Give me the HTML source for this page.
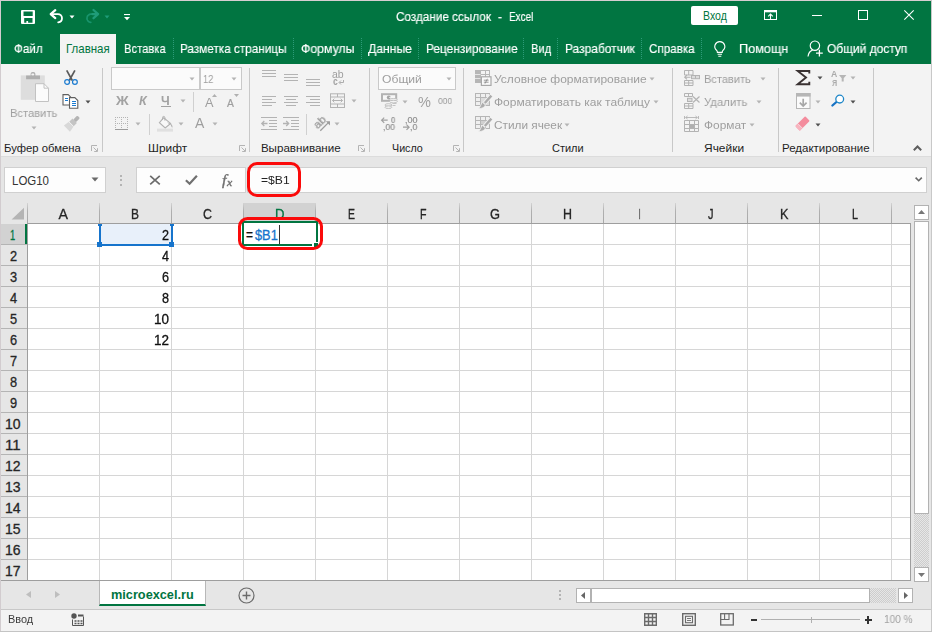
<!DOCTYPE html>
<html lang="ru"><head><meta charset="utf-8"><title>Создание ссылок - Excel</title>
<style>
html,body{margin:0;padding:0}
body{width:932px;height:632px;position:relative;overflow:hidden;background:#e6e6e6;font-family:"Liberation Sans",sans-serif;}
.t{position:absolute;white-space:nowrap;line-height:20px;transform-origin:0 0;}
svg{overflow:visible}
</style></head><body>
<section aria-label="Title bar and ribbon tabs">
<div style="position:absolute;left:0px;top:0px;width:932px;height:64px;background:#017541;"></div>
<div style="position:absolute;left:60px;top:34px;width:56px;height:31px;background:#f3f3f3;"></div>
<svg style="position:absolute;left:21px;top:10px;" width="14" height="14" viewBox="0 0 14 14"><path fill-rule="evenodd" fill="#fff" d="M1 0h12a1 1 0 0 1 1 1v12a1 1 0 0 1-1 1h-12a1 1 0 0 1-1-1v-12a1 1 0 0 1 1-1zM2.500 1.500v4.600h9.200v-4.600zM3.200 8.100v4.600h2.200v-1.700h1.700v1.700h4.400v-4.600z"/></svg>
<svg style="position:absolute;left:49px;top:9px;" width="16" height="15" viewBox="0 0 16 15"><path d="M6.300 1.100L1.700 5.100l4.600 4" fill="none" stroke="#fff" stroke-width="2.200" stroke-linecap="round" stroke-linejoin="round"/><path d="M2 5.100h6.600a4.100 4.100 0 0 1 4.400 4.200c0 2.200-1.500 3.800-3.800 4.100" fill="none" stroke="#fff" stroke-width="1.800" stroke-linecap="round" stroke-linejoin="round"/></svg>
<svg style="position:absolute;left:68.5px;top:14.5px;" width="6" height="4" viewBox="0 0 6 4"><path d="M.5 .5h5l-2.5 3z" fill="#fff"/></svg>
<svg style="position:absolute;left:84px;top:9px;" width="16" height="15" viewBox="0 0 16 15"><path d="M9.500 1l4.600 4.100-4.600 4.100M14 5.100h-5.500" fill="none" stroke="#1f9c78" stroke-width="2.300" stroke-linecap="round" stroke-linejoin="round"/><path d="M9 5.100h-1.600a4.100 4.100 0 0 0-4.400 4.200c0 2.200 1.500 3.800 3.800 4.100" fill="none" stroke="#1f9c78" stroke-width="1.700" stroke-linecap="round" stroke-dasharray="1.600 1" opacity=".8"/></svg>
<svg style="position:absolute;left:103.5px;top:14.5px;" width="6" height="4" viewBox="0 0 6 4"><path d="M.5 .5h5l-2.5 3z" fill="#1f9c78"/></svg>
<svg style="position:absolute;left:123.5px;top:14px;" width="6" height="7" viewBox="0 0 6 7"><rect x="0" y="0" width="6" height="1.100" fill="#fff"/><path d="M0 3h6l-3 3.300z" fill="#fff"/></svg>
<span class="t" style="left:395.60px;top:7px;font-size:12.5px;color:#fff;transform:scaleX(0.9383);will-change:transform;-webkit-text-stroke:.18px #fff;">Создание ссылок</span>
<span class="t" style="left:497.50px;top:7px;font-size:12.5px;color:#fff;transform:scaleX(0.9383);will-change:transform;-webkit-text-stroke:.18px #fff;">-</span>
<span class="t" style="left:508.80px;top:7px;font-size:12.5px;color:#fff;transform:scaleX(0.7984);will-change:transform;-webkit-text-stroke:.18px #fff;">Excel</span>
<div style="position:absolute;left:691px;top:6px;width:47px;height:19px;background:#fff;border-radius:2px;"></div>
<span class="t" style="left:702.70px;top:6px;font-size:12.4px;color:#017541;transform:scaleX(0.8483);">Вход</span>
<svg style="position:absolute;left:764px;top:10px;" width="13" height="10" viewBox="0 0 13 10"><rect x=".5" y=".5" width="12" height="9" fill="none" stroke="#fff"/><rect x=".5" y=".5" width="12" height="1.800" fill="#fff"/><path d="M6.500 9.500v-5.500M4.200 6.300l2.300-2.300 2.300 2.300" fill="none" stroke="#fff" stroke-width="1.100"/></svg>
<div style="position:absolute;left:812px;top:15px;width:10px;height:1px;background:#fff;"></div>
<svg style="position:absolute;left:858px;top:10px;" width="10" height="10" viewBox="0 0 10 10"><rect x=".5" y=".5" width="9" height="9" fill="none" stroke="#fff"/></svg>
<svg style="position:absolute;left:904px;top:10px;" width="10" height="10" viewBox="0 0 10 10"><path d="M.3 .3l9.400 9.400M9.700 .3l-9.400 9.400" stroke="#fff" stroke-width="1.100"/></svg>
<span class="t" style="left:13.70px;top:39px;font-size:12.8px;color:#fff;transform:scaleX(0.9124);will-change:transform;-webkit-text-stroke:.18px #fff;">Файл</span>
<span class="t" style="left:65.70px;top:39px;font-size:12.8px;color:#017541;transform:scaleX(0.8967);">Главная</span>
<span class="t" style="left:123.70px;top:39px;font-size:12.8px;color:#fff;transform:scaleX(0.8763);will-change:transform;-webkit-text-stroke:.18px #fff;">Вставка</span>
<span class="t" style="left:179.70px;top:39px;font-size:12.8px;color:#fff;transform:scaleX(0.9171);will-change:transform;-webkit-text-stroke:.18px #fff;">Разметка страницы</span>
<span class="t" style="left:300.90px;top:39px;font-size:12.8px;color:#fff;transform:scaleX(0.9603);will-change:transform;-webkit-text-stroke:.18px #fff;">Формулы</span>
<span class="t" style="left:367.90px;top:39px;font-size:12.8px;color:#fff;transform:scaleX(0.9516);will-change:transform;-webkit-text-stroke:.18px #fff;">Данные</span>
<span class="t" style="left:425.50px;top:39px;font-size:12.8px;color:#fff;transform:scaleX(0.9277);will-change:transform;-webkit-text-stroke:.18px #fff;">Рецензирование</span>
<span class="t" style="left:530.70px;top:39px;font-size:12.8px;color:#fff;transform:scaleX(0.8719);will-change:transform;-webkit-text-stroke:.18px #fff;">Вид</span>
<span class="t" style="left:564.70px;top:39px;font-size:12.8px;color:#fff;transform:scaleX(0.9355);will-change:transform;-webkit-text-stroke:.18px #fff;">Разработчик</span>
<span class="t" style="left:648.90px;top:39px;font-size:12.8px;color:#fff;transform:scaleX(0.9096);will-change:transform;-webkit-text-stroke:.18px #fff;">Справка</span>
<span class="t" style="left:738.90px;top:39px;font-size:12.8px;color:#fff;transform:scaleX(0.9895);will-change:transform;-webkit-text-stroke:.18px #fff;">Помощн</span>
<span class="t" style="left:826.90px;top:39px;font-size:12.8px;color:#fff;transform:scaleX(0.9335);will-change:transform;-webkit-text-stroke:.18px #fff;">Общий доступ</span>
<div style="position:absolute;left:172.5px;top:38px;width:0px;height:21px;border-left:1px dotted #2e9b78;"></div>
<div style="position:absolute;left:293.0px;top:38px;width:0px;height:21px;border-left:1px dotted #2e9b78;"></div>
<div style="position:absolute;left:361.0px;top:38px;width:0px;height:21px;border-left:1px dotted #2e9b78;"></div>
<div style="position:absolute;left:418.0px;top:38px;width:0px;height:21px;border-left:1px dotted #2e9b78;"></div>
<div style="position:absolute;left:523.0px;top:38px;width:0px;height:21px;border-left:1px dotted #2e9b78;"></div>
<div style="position:absolute;left:557.0px;top:38px;width:0px;height:21px;border-left:1px dotted #2e9b78;"></div>
<div style="position:absolute;left:641.0px;top:38px;width:0px;height:21px;border-left:1px dotted #2e9b78;"></div>
<div style="position:absolute;left:701.0px;top:38px;width:0px;height:21px;border-left:1px dotted #2e9b78;"></div>
<svg style="position:absolute;left:713.5px;top:41px;" width="12" height="16" viewBox="0 0 12 16"><path d="M5.800 .6a4.900 4.900 0 0 0-3.300 8.600c.6.600.9 1.300.9 2.200h4.800c0-.9.300-1.600.9-2.200a4.900 4.900 0 0 0-3.300-8.600z" fill="none" stroke="#fff" stroke-width="1.150"/><path d="M3.600 13.200h4.400M4.300 15.200h3" stroke="#fff" stroke-width="1.100"/></svg>
<svg style="position:absolute;left:807px;top:40px;" width="18" height="18" viewBox="0 0 18 18"><circle cx="7.900" cy="5.700" r="4.700" fill="none" stroke="#fff" stroke-width="1.150"/><path d="M1 16.500c.5-3.500 2.300-5.700 4.600-6.400" fill="none" stroke="#fff" stroke-width="1.150"/><path d="M12.400 9.800v6.800M9 13.200h6.800" stroke="#fff" stroke-width="1.300"/></svg>
</section>
<section aria-label="Ribbon: Home">
<div style="position:absolute;left:0px;top:64px;width:932px;height:92px;background:#f3f3f3;"></div>
<div style="position:absolute;left:0px;top:156px;width:932px;height:1px;background:#dcdcdc;"></div>
<div style="position:absolute;left:102px;top:68px;width:1px;height:84px;background:#c8c8c8;"></div>
<div style="position:absolute;left:249px;top:68px;width:1px;height:84px;background:#c8c8c8;"></div>
<div style="position:absolute;left:369px;top:68px;width:1px;height:84px;background:#c8c8c8;"></div>
<div style="position:absolute;left:463px;top:68px;width:1px;height:84px;background:#c8c8c8;"></div>
<div style="position:absolute;left:672px;top:68px;width:1px;height:84px;background:#c8c8c8;"></div>
<div style="position:absolute;left:778px;top:68px;width:1px;height:84px;background:#c8c8c8;"></div>
<div style="position:absolute;left:873px;top:68px;width:1px;height:84px;background:#c8c8c8;"></div>
<span class="t" style="left:3.70px;top:138px;font-size:11.6px;color:#1e1e1e;transform:scaleX(0.9740);">Буфер обмена</span>
<span class="t" style="left:147.90px;top:138px;font-size:11.6px;color:#1e1e1e;transform:scaleX(1.0245);">Шрифт</span>
<span class="t" style="left:260.90px;top:138px;font-size:11.6px;color:#1e1e1e;">Выравнивание</span>
<span class="t" style="left:392.20px;top:138px;font-size:11.6px;color:#1e1e1e;transform:scaleX(0.9235);">Число</span>
<span class="t" style="left:551.90px;top:138px;font-size:11.6px;color:#1e1e1e;transform:scaleX(0.9459);">Стили</span>
<span class="t" style="left:704.40px;top:138px;font-size:11.6px;color:#1e1e1e;transform:scaleX(1.0304);">Ячейки</span>
<span class="t" style="left:781.90px;top:138px;font-size:11.6px;color:#1e1e1e;transform:scaleX(0.9914);">Редактирование</span>
<svg style="position:absolute;left:91px;top:145px;" width="7" height="7" viewBox="0 0 7 7"><path d="M.5 6v-5.500h5.500" fill="none" stroke="#b4b4b4"/><path d="M2.500 2.500l3.500 3.500M6.500 3.200v3.300h-3.300" fill="none" stroke="#b4b4b4"/></svg>
<svg style="position:absolute;left:239px;top:145px;" width="7" height="7" viewBox="0 0 7 7"><path d="M.5 6v-5.500h5.500" fill="none" stroke="#b4b4b4"/><path d="M2.500 2.500l3.500 3.500M6.500 3.200v3.300h-3.300" fill="none" stroke="#b4b4b4"/></svg>
<svg style="position:absolute;left:358px;top:145px;" width="7" height="7" viewBox="0 0 7 7"><path d="M.5 6v-5.500h5.500" fill="none" stroke="#b4b4b4"/><path d="M2.500 2.500l3.500 3.500M6.500 3.200v3.300h-3.300" fill="none" stroke="#b4b4b4"/></svg>
<svg style="position:absolute;left:452.5px;top:145px;" width="7" height="7" viewBox="0 0 7 7"><path d="M.5 6v-5.500h5.500" fill="none" stroke="#b4b4b4"/><path d="M2.500 2.500l3.500 3.500M6.500 3.200v3.300h-3.300" fill="none" stroke="#b4b4b4"/></svg>
<svg style="position:absolute;left:913px;top:144.5px;" width="9" height="6" viewBox="0 0 9 6"><path d="M.8 5.200l3.700-3.700 3.700 3.700" fill="none" stroke="#5e5e5e" stroke-width="2"/></svg>
<svg style="position:absolute;left:20px;top:72px;" width="30" height="31" viewBox="0 0 30 31"><rect x=".8" y="3.400" width="24" height="24.400" fill="#dddddd"/><path fill-rule="evenodd" d="M6.100 7.200v-3.600h4.500v-1.500a2 2 0 0 1 2-2h.8a2 2 0 0 1 2 2v1.500h4.600v3.600zM12.200 1.600a.9.9 0 0 0 0 1.800h1.200a.9.9 0 0 0 0-1.800z" fill="#aeaeae"/><path d="M15.500 11.700h8.500l4.500 4.500v13.300h-13z" fill="#fbfbfb" stroke="#c2c2c2"/><path d="M24 11.700v4.500h4.500" fill="none" stroke="#c2c2c2"/></svg>
<span class="t" style="left:9.50px;top:103px;font-size:11.8px;color:#9e9e9e;transform:scaleX(0.9474);will-change:transform;">Вставить</span>
<svg style="position:absolute;left:30.6px;top:126.4px;" width="6" height="4" viewBox="0 0 6 4"><path d="M.5 .5h5l-2.5 3z" fill="#b4b4b4"/></svg>
<svg style="position:absolute;left:63px;top:70px;" width="16" height="16" viewBox="0 0 16 16"><path d="M3.700 .3l5.600 10.200M11.900 .3l-5.600 10.200" stroke="#5a5a5a" stroke-width="1.700"/><circle cx="4.100" cy="12" r="2.400" fill="#f3f3f3" stroke="#1b7bd0" stroke-width="1.200"/><circle cx="11.900" cy="12" r="2.400" fill="#f3f3f3" stroke="#1b7bd0" stroke-width="1.200"/></svg>
<svg style="position:absolute;left:62px;top:94px;" width="17" height="15" viewBox="0 0 17 15"><path d="M1 .6h5.200l2.800 2.800v7.600h-8z" fill="#fff" stroke="#5f5f5f" stroke-width="1.100"/><path d="M3 4.500h3M3 6.500h3" stroke="#1b7bd0" stroke-width="1"/><path d="M7.500 3.600h5.300l3 3v7.600h-8.300z" fill="#fff" stroke="#5f5f5f" stroke-width="1.100"/><path d="M10 7.500h4M10 9.500h4M10 11.500h4" stroke="#1b7bd0" stroke-width="1"/></svg>
<svg style="position:absolute;left:84.5px;top:99.6px;" width="6" height="4" viewBox="0 0 6 4"><path d="M.5 .5h5l-2.5 3z" fill="#505050"/></svg>
<svg style="position:absolute;left:63px;top:116px;" width="17" height="15" viewBox="0 0 17 15"><g transform="rotate(-45 9 7.500)"><rect x="12.400" y="5.600" width="6" height="3.800" rx="1.200" fill="#b4b4b4"/><rect x="8.200" y="4.400" width="4.600" height="6.200" fill="#c4c4c4"/><path d="M8 4.200l-6.200 -1v8.600l6.200-1z" fill="#d8d8d8"/><path d="M8 4.200v6.600" stroke="#f3f3f3" stroke-width=".8"/></g></svg>
<div style="position:absolute;left:111px;top:67px;width:88.5px;height:22.5px;background:#fbfbfb;border:1px solid #c9c9c9;box-sizing:border-box;"></div>
<div style="position:absolute;left:199.5px;top:67px;width:42.5px;height:22.5px;background:#fbfbfb;border:1px solid #c9c9c9;box-sizing:border-box;"></div>
<svg style="position:absolute;left:188.7px;top:76.5px;" width="6" height="4" viewBox="0 0 6 4"><path d="M.5 .5h5l-2.5 3z" fill="#b4b4b4"/></svg>
<svg style="position:absolute;left:231.4px;top:76.5px;" width="6" height="4" viewBox="0 0 6 4"><path d="M.5 .5h5l-2.5 3z" fill="#b4b4b4"/></svg>
<span class="t" style="left:203.00px;top:69px;font-size:11.8px;color:#9e9e9e;transform:scaleX(0.7922);will-change:transform;">12</span>
<span class="t" style="left:115.67px;top:91px;font-size:12.4px;color:#a2a2a2;transform:scaleX(1.1282);font-weight:bold;will-change:transform;">Ж</span>
<span class="t" style="left:139.20px;top:91px;font-size:12.4px;color:#a2a2a2;transform:scaleX(1.0193);font-weight:bold;font-style:italic;will-change:transform;">К</span>
<span class="t" style="left:161.30px;top:91px;font-size:12.4px;color:#a2a2a2;transform:scaleX(0.9643);font-weight:bold;will-change:transform;">Ч</span>
<div style="position:absolute;left:161px;top:105.6px;width:10px;height:1px;background:#a2a2a2;"></div>
<svg style="position:absolute;left:179.5px;top:99.2px;" width="6" height="4" viewBox="0 0 6 4"><path d="M.5 .5h5l-2.5 3z" fill="#b4b4b4"/></svg>
<div style="position:absolute;left:193px;top:91.5px;width:1px;height:20px;background:#d0d0d0;"></div>
<span class="t" style="left:204.90px;top:93px;font-size:12px;color:#9e9e9e;transform:scaleX(1.0612);will-change:transform;">A</span>
<svg style="position:absolute;left:212px;top:94px;" width="5" height="3" viewBox="0 0 5 3"><path d="M0 3h5l-2.500-3z" fill="#b0b0b0"/></svg>
<span class="t" style="left:227.30px;top:94px;font-size:10.2px;color:#9e9e9e;transform:scaleX(1.0134);will-change:transform;-webkit-text-stroke:.2px #9e9e9e;">A</span>
<svg style="position:absolute;left:234px;top:94px;" width="5" height="3" viewBox="0 0 5 3"><path d="M0 0h5l-2.500 3z" fill="#b0b0b0"/></svg>
<svg style="position:absolute;left:115px;top:117px;" width="13" height="13" viewBox="0 0 13 13"><path d="M0 .5h13M0 6.500h13M.5 0v13M6.500 0v13M12.500 0v13" fill="none" stroke="#b4b4b4" stroke-dasharray="1 1"/><path d="M0 12.500h13" stroke="#9c9c9c"/></svg>
<svg style="position:absolute;left:135.4px;top:122.3px;" width="6" height="4" viewBox="0 0 6 4"><path d="M.5 .5h5l-2.5 3z" fill="#b4b4b4"/></svg>
<div style="position:absolute;left:149px;top:114px;width:1px;height:21px;background:#d0d0d0;"></div>
<svg style="position:absolute;left:157px;top:116px;" width="17" height="16" viewBox="0 0 17 16"><path d="M6.600 1.800l7 5.600-5.400 4.600-5.800-5.400z" fill="#f8f8f8" stroke="#b2b2b2" stroke-width="1.100"/><path d="M5.500 4v-2.400a1.200 1.200 0 0 1 2.400 0v3" fill="none" stroke="#b2b2b2"/><path d="M13.600 7.400c1.600 1.400 2.400 3 1.600 4.400-.8-1.200-1.600-2.600-1.600-4.400z" fill="#b2b2b2"/><path d="M10 6l4 2-1 1z" fill="#b2b2b2"/><rect x="0" y="12.600" width="16" height="3" fill="#e0e0e0"/></svg>
<svg style="position:absolute;left:178.4px;top:122.3px;" width="6" height="4" viewBox="0 0 6 4"><path d="M.5 .5h5l-2.5 3z" fill="#b4b4b4"/></svg>
<span class="t" style="left:194.80px;top:113px;font-size:14px;color:#9e9e9e;transform:scaleX(0.9952);will-change:transform;">A</span>
<svg style="position:absolute;left:212.4px;top:122.3px;" width="6" height="4" viewBox="0 0 6 4"><path d="M.5 .5h5l-2.5 3z" fill="#b4b4b4"/></svg>
<svg style="position:absolute;left:262px;top:70px;" width="14" height="7" viewBox="0 0 14 7"><rect x="0" y="0" width="14" height="1" fill="#b3b3b3"/><rect x="0" y="3" width="14" height="1" fill="#b3b3b3"/><rect x="0" y="6" width="14" height="1" fill="#b3b3b3"/></svg>
<svg style="position:absolute;left:284px;top:74px;" width="14" height="7" viewBox="0 0 14 7"><rect x="0" y="0" width="14" height="1" fill="#b3b3b3"/><rect x="0" y="3" width="14" height="1" fill="#b3b3b3"/><rect x="0" y="6" width="14" height="1" fill="#b3b3b3"/></svg>
<svg style="position:absolute;left:306px;top:79px;" width="14" height="7" viewBox="0 0 14 7"><rect x="0" y="0" width="14" height="1" fill="#b3b3b3"/><rect x="0" y="3" width="14" height="1" fill="#b3b3b3"/><rect x="0" y="6" width="14" height="1" fill="#b3b3b3"/></svg>
<svg style="position:absolute;left:262px;top:96px;" width="14" height="10" viewBox="0 0 14 10"><rect x="0" y="0" width="14" height="1" fill="#b3b3b3"/><rect x="0" y="3" width="10" height="1" fill="#b3b3b3"/><rect x="0" y="6" width="14" height="1" fill="#b3b3b3"/><rect x="0" y="9" width="10" height="1" fill="#b3b3b3"/></svg>
<svg style="position:absolute;left:284px;top:96px;" width="14" height="10" viewBox="0 0 14 10"><rect x="0.0" y="0" width="14" height="1" fill="#b3b3b3"/><rect x="2.0" y="3" width="10" height="1" fill="#b3b3b3"/><rect x="0.0" y="6" width="14" height="1" fill="#b3b3b3"/><rect x="2.0" y="9" width="10" height="1" fill="#b3b3b3"/></svg>
<svg style="position:absolute;left:306px;top:96px;" width="14" height="10" viewBox="0 0 14 10"><rect x="0" y="0" width="14" height="1" fill="#b3b3b3"/><rect x="4" y="3" width="10" height="1" fill="#b3b3b3"/><rect x="0" y="6" width="14" height="1" fill="#b3b3b3"/><rect x="4" y="9" width="10" height="1" fill="#b3b3b3"/></svg>
<span class="t" style="left:332.10px;top:64px;font-size:10.5px;color:#9e9e9e;transform:scaleX(0.9674);will-change:transform;">ab</span>
<span class="t" style="left:332.50px;top:71px;font-size:10.5px;color:#9e9e9e;transform:scaleX(0.8065);font-weight:bold;will-change:transform;">c</span>
<svg style="position:absolute;left:339px;top:80px;" width="5" height="5" viewBox="0 0 5 5"><path d="M4.500 0v2.500h-4M2 .5l-2 2 2 2" fill="none" stroke="#adadad"/></svg>
<svg style="position:absolute;left:330px;top:93px;" width="15" height="15" viewBox="0 0 15 15"><rect x=".5" y=".8" width="14" height="13.700" fill="none" stroke="#b3b3b3"/><path d="M.5 4h14M.5 11h14M7.500 .8v3.200M7.500 11v3.500" stroke="#b3b3b3"/><path d="M2.500 7.500h10M4.300 5.700l-1.800 1.800 1.800 1.800M10.700 5.700l1.800 1.800-1.800 1.800" fill="none" stroke="#b3b3b3"/></svg>
<svg style="position:absolute;left:351.4px;top:99.3px;" width="6" height="4" viewBox="0 0 6 4"><path d="M.5 .5h5l-2.5 3z" fill="#b4b4b4"/></svg>
<svg style="position:absolute;left:261px;top:117px;" width="16" height="13" viewBox="0 0 16 13"><path d="M0 .5h16M8 3.500h8M8 6.500h8M8 9.500h8M0 12.500h16" stroke="#b3b3b3"/><path d="M6.500 6.500h-5.500M3.300 4l-2.500 2.500 2.500 2.500" fill="none" stroke="#b3b3b3" stroke-width="1.300"/></svg>
<svg style="position:absolute;left:283px;top:117px;" width="16" height="13" viewBox="0 0 16 13"><path d="M0 .5h16M8 3.500h8M8 6.500h8M8 9.500h8M0 12.500h16" stroke="#b3b3b3"/><path d="M0 6.500h5.500M3.200 4l2.500 2.500-2.500 2.500" fill="none" stroke="#b3b3b3" stroke-width="1.300"/></svg>
<div style="position:absolute;left:306px;top:114px;width:1px;height:21px;background:#d0d0d0;"></div>
<span class="t" style="left:313.300px;top:111.700px;font-size:11.500px;color:#909090;-webkit-text-stroke:.25px #909090;will-change:transform;transform:rotate(-45deg);transform-origin:50% 50%;">ab</span>
<svg style="position:absolute;left:319px;top:120px;" width="12" height="12" viewBox="0 0 12 12"><path d="M1.300 10.700l8.600-8.600" fill="none" stroke="#9c9c9c" stroke-width="1.300"/><path d="M6.800 1.200h4.200v4.200z" fill="#9c9c9c"/></svg>
<svg style="position:absolute;left:333.5px;top:122.3px;" width="6" height="4" viewBox="0 0 6 4"><path d="M.5 .5h5l-2.5 3z" fill="#b4b4b4"/></svg>
<div style="position:absolute;left:378px;top:67px;width:78px;height:22.5px;background:#fbfbfb;border:1px solid #c9c9c9;box-sizing:border-box;"></div>
<span class="t" style="left:381.60px;top:69px;font-size:11.8px;color:#9e9e9e;transform:scaleX(1.0278);will-change:transform;">Общий</span>
<svg style="position:absolute;left:445.5px;top:76.5px;" width="6" height="4" viewBox="0 0 6 4"><path d="M.5 .5h5l-2.5 3z" fill="#b4b4b4"/></svg>
<svg style="position:absolute;left:380px;top:92px;" width="18" height="18" viewBox="0 0 18 18"><rect x="2" y="2.200" width="14.200" height="6.600" fill="#f6f6f6" stroke="#b2b2b2" stroke-width="2"/><circle cx="8.800" cy="5.500" r="2" fill="#a6a6a6"/><path d="M8.800 5.500l2-1v2z" fill="#f6f6f6"/><g fill="#f3f3f3" stroke="#bcbcbc" stroke-width=".9"><ellipse cx="13.400" cy="7.800" rx="3.800" ry="1.300"/><ellipse cx="13.400" cy="9.600" rx="3.800" ry="1.300"/><ellipse cx="8.400" cy="13" rx="3.500" ry="1.300"/><ellipse cx="8.400" cy="15.200" rx="3.500" ry="1.300"/></g><path d="M12.500 11.500h4M12.500 13.500h3" stroke="#c4c4c4"/></svg>
<svg style="position:absolute;left:402.4px;top:99.5px;" width="6" height="4" viewBox="0 0 6 4"><path d="M.5 .5h5l-2.5 3z" fill="#b4b4b4"/></svg>
<span class="t" style="left:417.50px;top:92px;font-size:14.5px;color:#a0a0a0;transform:scaleX(0.9764);will-change:transform;">%</span>
<span class="t" style="left:438.00px;top:91px;font-size:9.5px;color:#9a9a9a;transform:scaleX(0.8964);will-change:transform;">000</span>
<span class="t" style="left:390.90px;top:110px;font-size:9px;color:#8f8f8f;transform:scaleX(0.8408);will-change:transform;-webkit-text-stroke:.2px #8f8f8f;">0</span>
<span class="t" style="left:383.20px;top:117px;font-size:9px;color:#8f8f8f;transform:scaleX(0.9512);will-change:transform;-webkit-text-stroke:.2px #8f8f8f;">,00</span>
<svg style="position:absolute;left:381px;top:117px;" width="7" height="6" viewBox="0 0 7 6"><path d="M6.700 3.200h-5.700M3.200 .6l-2.600 2.600 2.600 2.600" fill="none" stroke="#a0a0a0" stroke-width="1.200"/></svg>
<span class="t" style="left:404.80px;top:110px;font-size:9px;color:#8f8f8f;will-change:transform;-webkit-text-stroke:.2px #8f8f8f;">,00</span>
<span class="t" style="left:410.00px;top:117px;font-size:9px;color:#8f8f8f;transform:scaleX(0.9714);will-change:transform;-webkit-text-stroke:.2px #8f8f8f;">,0</span>
<svg style="position:absolute;left:403px;top:124px;" width="7" height="6" viewBox="0 0 7 6"><path d="M0 3.200h5.700M3.500 .6l2.600 2.600-2.600 2.600" fill="none" stroke="#a0a0a0" stroke-width="1.200"/></svg>
<svg style="position:absolute;left:475px;top:70px;" width="17" height="16" viewBox="0 0 17 16"><rect x=".5" y=".5" width="14" height="12" fill="#f3f3f3" stroke="#b6b6b6"/><path d="M.5 4.500h14M.5 8.500h14M5.500 .5v12M10.500 .5v12" stroke="#b6b6b6"/><rect x="0" y="0" width="5.500" height="13" fill="#b6b6b6"/><path d="M0 4.500h5.500M0 8.500h5.500" stroke="#e4e4e4"/><rect x="6.400" y="6.800" width="9.600" height="8.600" fill="#fafafa" stroke="#a8a8a8" stroke-width="1.200"/><path d="M8.800 10.200h4.800M8.800 12.200h4.800M12.400 8.800l-2.400 4.800" stroke="#8f8f8f" stroke-width=".9"/></svg>
<svg style="position:absolute;left:475px;top:93px;" width="17" height="16" viewBox="0 0 17 16"><rect x=".5" y=".5" width="14" height="12" fill="#efefef" stroke="#b6b6b6"/><path d="M.5 4.500h14M.5 8.500h14M5.500 .5v12M10.500 .5v12" stroke="#b6b6b6"/><rect x="6" y="5" width="8" height="7" fill="#dcdcdc"/><path d="M16.400 2.600l-6.800 7.600" stroke="#f3f3f3" stroke-width="4.200"/><path d="M16.400 2.600l-6.600 7.400" stroke="#acacac" stroke-width="2.400"/><path d="M7.400 9.200l3 2.800c-.6 2.400-3.600 3.800-7 3.400 2-1 2.200-3.800 4-6.200z" fill="#acacac" stroke="#f3f3f3" stroke-width=".8"/></svg>
<svg style="position:absolute;left:475px;top:116px;" width="17" height="16" viewBox="0 0 17 16"><rect x=".5" y=".5" width="14" height="12" fill="#efefef" stroke="#b6b6b6"/><path d="M.5 4.500h14M.5 8.500h14M5.500 .5v12M10.500 .5v12" stroke="#b6b6b6"/><rect x="6" y="5" width="8" height="3" fill="#d0d0d0"/><path d="M16.400 2.600l-6.800 7.600" stroke="#f3f3f3" stroke-width="4.200"/><path d="M16.400 2.600l-6.600 7.400" stroke="#acacac" stroke-width="2.400"/><path d="M7.400 9.200l3 2.800c-.6 2.400-3.600 3.800-7 3.400 2-1 2.200-3.800 4-6.200z" fill="#acacac" stroke="#f3f3f3" stroke-width=".8"/></svg>
<span class="t" style="left:494.30px;top:69px;font-size:11.8px;color:#9e9e9e;transform:scaleX(1.0171);will-change:transform;">Условное форматирование</span>
<svg style="position:absolute;left:648.5px;top:76.5px;" width="6" height="4" viewBox="0 0 6 4"><path d="M.5 .5h5l-2.5 3z" fill="#b4b4b4"/></svg>
<span class="t" style="left:494.30px;top:92px;font-size:11.8px;color:#9e9e9e;transform:scaleX(1.0162);will-change:transform;">Форматировать как таблицу</span>
<svg style="position:absolute;left:652.5px;top:99.5px;" width="6" height="4" viewBox="0 0 6 4"><path d="M.5 .5h5l-2.5 3z" fill="#b4b4b4"/></svg>
<span class="t" style="left:494.30px;top:115px;font-size:11.8px;color:#9e9e9e;will-change:transform;">Стили ячеек</span>
<svg style="position:absolute;left:564.0px;top:122.5px;" width="6" height="4" viewBox="0 0 6 4"><path d="M.5 .5h5l-2.5 3z" fill="#b4b4b4"/></svg>
<svg style="position:absolute;left:684px;top:70px;" width="16" height="16" viewBox="0 0 16 16"><g fill="none" stroke="#b3b3b3"><path d="M.5 .5h8.500v4.500h-8.500zM4.700 .5v4.500M.5 10.500h8.500v5h-8.500zM4.700 10.500v5M.5 13h8.500"/><rect x="7.500" y="5.500" width="8" height="3.200" fill="#dcdcdc"/><path d="M11.500 5.500v3.200"/><path d="M6.500 7.200h-5.500M3 5l-2.300 2.200 2.300 2.200" stroke-width="1.100"/></g></svg>
<svg style="position:absolute;left:684px;top:93px;" width="16" height="16" viewBox="0 0 16 16"><g fill="none" stroke="#b3b3b3"><path d="M.5 .5h8v3h-8zM4.500 .5v3M.5 10.500h8.500v5h-8.500zM4.700 10.500v5M.5 13h8.500"/><rect x="3.500" y="5.300" width="4.500" height="3.200" fill="#dcdcdc"/><path d="M9 3.500l6.500 6M15.500 3.500l-6.500 6" stroke-width="1.200"/></g></svg>
<svg style="position:absolute;left:684px;top:116px;" width="16" height="16" viewBox="0 0 16 16"><g fill="none" stroke="#b3b3b3"><path d="M.5 4.500h14v11h-14zM.5 8.500h14M.5 12.500h14M5.500 4.500v11M10.500 4.500v11"/><rect x="6" y="9" width="4" height="3" fill="#b0b0b0" stroke="none"/><path d="M.5 0v3M14.500 0v3M1.500 1.500h12M3.500 0l-1.800 1.500 1.800 1.500M11.500 0l1.800 1.500-1.800 1.500" stroke-width=".9"/></g></svg>
<span class="t" style="left:703.50px;top:69px;font-size:11.8px;color:#9e9e9e;transform:scaleX(0.9374);will-change:transform;">Вставить</span>
<svg style="position:absolute;left:760.2px;top:76.6px;" width="6" height="4" viewBox="0 0 6 4"><path d="M.5 .5h5l-2.5 3z" fill="#b4b4b4"/></svg>
<span class="t" style="left:703.50px;top:92px;font-size:11.8px;color:#9e9e9e;transform:scaleX(0.9612);will-change:transform;">Удалить</span>
<svg style="position:absolute;left:756.4px;top:99.5px;" width="6" height="4" viewBox="0 0 6 4"><path d="M.5 .5h5l-2.5 3z" fill="#b4b4b4"/></svg>
<span class="t" style="left:703.50px;top:115px;font-size:11.8px;color:#9e9e9e;transform:scaleX(1.0067);will-change:transform;">Формат</span>
<svg style="position:absolute;left:748.5px;top:122.5px;" width="6" height="4" viewBox="0 0 6 4"><path d="M.5 .5h5l-2.5 3z" fill="#b4b4b4"/></svg>
<svg style="position:absolute;left:795px;top:70px;" width="16" height="15.5" viewBox="0 0 16 15.5"><path d="M14.300 3.400v-2.400h-11.600l8.300 6.600-8.300 6.600h11.600v-2.400" fill="none" stroke="#3a3232" stroke-width="1.900" stroke-linejoin="miter"/></svg>
<svg style="position:absolute;left:816.5px;top:76.4px;" width="6" height="4" viewBox="0 0 6 4"><path d="M.5 .5h5l-2.5 3z" fill="#505050"/></svg>
<span class="t" style="left:830.90px;top:64px;font-size:8.7px;color:#ababab;transform:scaleX(0.9864);font-weight:bold;will-change:transform;">А</span>
<span class="t" style="left:831.50px;top:73px;font-size:8.7px;color:#ababab;transform:scaleX(0.8142);font-weight:bold;will-change:transform;">Я</span>
<svg style="position:absolute;left:839px;top:75px;" width="8" height="7" viewBox="0 0 8 7"><path d="M0 0h7.400l-2.700 3.200v3.300h-2v-3.300z" fill="#b6b6b6"/></svg>
<svg style="position:absolute;left:849.6px;top:76.4px;" width="6" height="4" viewBox="0 0 6 4"><path d="M.5 .5h5l-2.5 3z" fill="#b4b4b4"/></svg>
<svg style="position:absolute;left:795.5px;top:93px;" width="15" height="16" viewBox="0 0 15 16"><rect x=".5" y=".5" width="13.500" height="15" fill="#fbfbfb" stroke="#b6b6b6"/><rect x="0" y="0" width="14.500" height="3.600" fill="#b6b6b6"/><path d="M7.200 5.800v7M3.800 9.600l3.400 3.400 3.400-3.400" fill="none" stroke="#a8a8a8" stroke-width="1.700"/></svg>
<svg style="position:absolute;left:814.5px;top:99.5px;" width="6" height="4" viewBox="0 0 6 4"><path d="M.5 .5h5l-2.5 3z" fill="#b4b4b4"/></svg>
<svg style="position:absolute;left:830px;top:93px;" width="16" height="15" viewBox="0 0 16 15"><path d="M7 8.500l-4.600 4" stroke="#1672c4" stroke-width="2.300" stroke-linecap="round"/><circle cx="9.700" cy="6.100" r="3.900" fill="#fff" stroke="#1d86c8" stroke-width="1.300"/></svg>
<svg style="position:absolute;left:849.6px;top:99.5px;" width="6" height="4" viewBox="0 0 6 4"><path d="M.5 .5h5l-2.5 3z" fill="#505050"/></svg>
<svg style="position:absolute;left:796px;top:116.5px;" width="13" height="13" viewBox="0 0 13 13"><g transform="rotate(-45 6.500 6.500)"><rect x="-.5" y="3.300" width="14" height="6.400" rx=".8" fill="#f48c9d"/><rect x="-.5" y="3.300" width="3.400" height="6.400" rx=".8" fill="#f8b4bf"/><path d="M3.100 3.300v6.400" stroke="#f3f3f3" stroke-width=".7"/></g></svg>
<svg style="position:absolute;left:814.5px;top:122.5px;" width="6" height="4" viewBox="0 0 6 4"><path d="M.5 .5h5l-2.5 3z" fill="#505050"/></svg>
</section>
<section aria-label="Formula bar">
<div style="position:absolute;left:4px;top:167px;width:102px;height:26px;background:#fdfdfd;border:1px solid #d0d0d0;box-sizing:border-box;"></div>
<span class="t" style="left:12.00px;top:171px;font-size:12.5px;color:#333;transform:scaleX(0.9178);">LOG10</span>
<svg style="position:absolute;left:91.3px;top:177.0px;" width="8" height="5" viewBox="0 0 8 5"><path d="M.5 .5h7l-3.5 4z" fill="#6a6a6a"/></svg>
<div style="position:absolute;left:120px;top:174.5px;width:2px;height:2px;background:#b4b4b4;"></div>
<div style="position:absolute;left:120px;top:179px;width:2px;height:2px;background:#b4b4b4;"></div>
<div style="position:absolute;left:120px;top:183.5px;width:2px;height:2px;background:#b4b4b4;"></div>
<div style="position:absolute;left:136px;top:167px;width:110px;height:26px;background:#fdfdfd;border:1px solid #d0d0d0;box-sizing:border-box;"></div>
<div style="position:absolute;left:247px;top:167px;width:680px;height:26px;background:#fdfdfd;border:1px solid #d0d0d0;box-sizing:border-box;"></div>
<svg style="position:absolute;left:149px;top:175px;" width="12" height="10" viewBox="0 0 12 10"><path d="M1.200 .8l9.600 8.600M10.800 .8l-9.600 8.600" stroke="#6c6c6c" stroke-width="1.700"/></svg>
<svg style="position:absolute;left:185px;top:175px;" width="13" height="10" viewBox="0 0 13 10"><path d="M.9 5.300l3.700 3.500 7.300-8" fill="none" stroke="#707070" stroke-width="2.200"/></svg>
<span class="t" style="left:221.60px;top:170px;font-size:14.5px;color:#707070;transform:scaleX(1.1174);font-style:italic;font-family:'Liberation Serif',serif;-webkit-text-stroke:.35px #707070;">f</span>
<span class="t" style="left:227.45px;top:173px;font-size:9.5px;color:#707070;transform:scaleX(1.2425);font-style:italic;font-family:'Liberation Serif',serif;-webkit-text-stroke:.35px #707070;">x</span>
<svg style="position:absolute;left:915px;top:177px;" width="8" height="5" viewBox="0 0 8 5"><path d="M.6 .6l3.100 3.100 3.100-3.100" fill="none" stroke="#686868" stroke-width="1.600"/></svg>
<span class="t" style="left:261.30px;top:170px;font-size:11.5px;color:#222;transform:scaleX(1.0527);">=$B1</span>
<div style="position:absolute;left:247px;top:162px;width:54px;height:35px;border:3.200px solid #fb0a0a;border-radius:10px;box-sizing:border-box;"></div>
</section>
<section aria-label="Worksheet grid">
<div style="position:absolute;left:0px;top:203px;width:911px;height:20px;background:#e6e6e6;"></div>
<div style="position:absolute;left:28px;top:224px;width:882px;height:357px;background:#fff;"></div>
<svg style="position:absolute;left:11px;top:207px;" width="14" height="13" viewBox="0 0 14 13"><path d="M13 .7v11.800h-12.400z" fill="#b4b4b4"/></svg>
<div style="position:absolute;left:244px;top:203px;width:71px;height:20px;background:#d2d2d2;"></div>
<div style="position:absolute;left:244px;top:221px;width:72px;height:2px;background:#017541;"></div>
<span class="t" style="left:58.50px;top:204px;font-size:14.2px;color:#262626;-webkit-text-stroke:.3px currentColor;">A</span>
<span class="t" style="left:131.00px;top:204px;font-size:14.2px;color:#262626;transform:scaleX(0.8440);-webkit-text-stroke:.3px currentColor;">B</span>
<span class="t" style="left:202.50px;top:204px;font-size:14.2px;color:#262626;transform:scaleX(0.8772);-webkit-text-stroke:.3px currentColor;">C</span>
<span class="t" style="left:274.50px;top:204px;font-size:14.2px;color:#017541;transform:scaleX(0.9260);-webkit-text-stroke:.3px currentColor;">D</span>
<span class="t" style="left:347.50px;top:204px;font-size:14.2px;color:#262626;transform:scaleX(0.7385);-webkit-text-stroke:.3px currentColor;">E</span>
<span class="t" style="left:419.50px;top:204px;font-size:14.2px;color:#262626;transform:scaleX(0.7504);-webkit-text-stroke:.3px currentColor;">F</span>
<span class="t" style="left:490.00px;top:204px;font-size:14.2px;color:#262626;transform:scaleX(0.9058);-webkit-text-stroke:.3px currentColor;">G</span>
<span class="t" style="left:562.50px;top:204px;font-size:14.2px;color:#262626;transform:scaleX(0.8772);-webkit-text-stroke:.3px currentColor;">H</span>
<span class="t" style="left:638.50px;top:204px;font-size:14.2px;color:#262626;transform:scaleX(0.3807);-webkit-text-stroke:.3px currentColor;">I</span>
<span class="t" style="left:707.50px;top:204px;font-size:14.2px;color:#262626;transform:scaleX(0.7746);-webkit-text-stroke:.3px currentColor;">J</span>
<span class="t" style="left:779.50px;top:204px;font-size:14.2px;color:#262626;transform:scaleX(0.8968);-webkit-text-stroke:.3px currentColor;">K</span>
<span class="t" style="left:852.00px;top:204px;font-size:14.2px;color:#262626;transform:scaleX(0.7613);-webkit-text-stroke:.3px currentColor;">L</span>
<div style="position:absolute;left:27px;top:203px;width:1px;height:20px;background:linear-gradient(#d4d4d4,#b0b0b0 40%,#a8a8a8);"></div>
<div style="position:absolute;left:99px;top:203px;width:1px;height:20px;background:linear-gradient(#d4d4d4,#b0b0b0 40%,#a8a8a8);"></div>
<div style="position:absolute;left:171px;top:203px;width:1px;height:20px;background:linear-gradient(#d4d4d4,#b0b0b0 40%,#a8a8a8);"></div>
<div style="position:absolute;left:243px;top:203px;width:1px;height:20px;background:linear-gradient(#d4d4d4,#b0b0b0 40%,#a8a8a8);"></div>
<div style="position:absolute;left:315px;top:203px;width:1px;height:20px;background:linear-gradient(#d4d4d4,#b0b0b0 40%,#a8a8a8);"></div>
<div style="position:absolute;left:387px;top:203px;width:1px;height:20px;background:linear-gradient(#d4d4d4,#b0b0b0 40%,#a8a8a8);"></div>
<div style="position:absolute;left:459px;top:203px;width:1px;height:20px;background:linear-gradient(#d4d4d4,#b0b0b0 40%,#a8a8a8);"></div>
<div style="position:absolute;left:531px;top:203px;width:1px;height:20px;background:linear-gradient(#d4d4d4,#b0b0b0 40%,#a8a8a8);"></div>
<div style="position:absolute;left:603px;top:203px;width:1px;height:20px;background:linear-gradient(#d4d4d4,#b0b0b0 40%,#a8a8a8);"></div>
<div style="position:absolute;left:675px;top:203px;width:1px;height:20px;background:linear-gradient(#d4d4d4,#b0b0b0 40%,#a8a8a8);"></div>
<div style="position:absolute;left:747px;top:203px;width:1px;height:20px;background:linear-gradient(#d4d4d4,#b0b0b0 40%,#a8a8a8);"></div>
<div style="position:absolute;left:819px;top:203px;width:1px;height:20px;background:linear-gradient(#d4d4d4,#b0b0b0 40%,#a8a8a8);"></div>
<div style="position:absolute;left:891px;top:203px;width:1px;height:20px;background:linear-gradient(#d4d4d4,#b0b0b0 40%,#a8a8a8);"></div>
<div style="position:absolute;left:99px;top:224px;width:1px;height:357px;background:#d6d6d6;"></div>
<div style="position:absolute;left:171px;top:224px;width:1px;height:357px;background:#d6d6d6;"></div>
<div style="position:absolute;left:243px;top:224px;width:1px;height:357px;background:#d6d6d6;"></div>
<div style="position:absolute;left:315px;top:224px;width:1px;height:357px;background:#d6d6d6;"></div>
<div style="position:absolute;left:387px;top:224px;width:1px;height:357px;background:#d6d6d6;"></div>
<div style="position:absolute;left:459px;top:224px;width:1px;height:357px;background:#d6d6d6;"></div>
<div style="position:absolute;left:531px;top:224px;width:1px;height:357px;background:#d6d6d6;"></div>
<div style="position:absolute;left:603px;top:224px;width:1px;height:357px;background:#d6d6d6;"></div>
<div style="position:absolute;left:675px;top:224px;width:1px;height:357px;background:#d6d6d6;"></div>
<div style="position:absolute;left:747px;top:224px;width:1px;height:357px;background:#d6d6d6;"></div>
<div style="position:absolute;left:819px;top:224px;width:1px;height:357px;background:#d6d6d6;"></div>
<div style="position:absolute;left:891px;top:224px;width:1px;height:357px;background:#d6d6d6;"></div>
<span class="t" style="left:9.70px;top:225px;font-size:14.2px;color:#017541;transform:scaleX(0.9009);-webkit-text-stroke:.3px currentColor;">1</span>
<div style="position:absolute;left:28px;top:244px;width:882px;height:1px;background:#d6d6d6;"></div>
<div style="position:absolute;left:0px;top:244px;width:27px;height:1px;background:#b4b4b4;"></div>
<span class="t" style="left:9.70px;top:246px;font-size:14.2px;color:#262626;transform:scaleX(0.9009);-webkit-text-stroke:.3px currentColor;">2</span>
<div style="position:absolute;left:28px;top:265px;width:882px;height:1px;background:#d6d6d6;"></div>
<div style="position:absolute;left:0px;top:265px;width:27px;height:1px;background:#b4b4b4;"></div>
<span class="t" style="left:9.70px;top:267px;font-size:14.2px;color:#262626;transform:scaleX(0.9009);-webkit-text-stroke:.3px currentColor;">3</span>
<div style="position:absolute;left:28px;top:286px;width:882px;height:1px;background:#d6d6d6;"></div>
<div style="position:absolute;left:0px;top:286px;width:27px;height:1px;background:#b4b4b4;"></div>
<span class="t" style="left:9.70px;top:288px;font-size:14.2px;color:#262626;transform:scaleX(0.9009);-webkit-text-stroke:.3px currentColor;">4</span>
<div style="position:absolute;left:28px;top:307px;width:882px;height:1px;background:#d6d6d6;"></div>
<div style="position:absolute;left:0px;top:307px;width:27px;height:1px;background:#b4b4b4;"></div>
<span class="t" style="left:9.70px;top:309px;font-size:14.2px;color:#262626;transform:scaleX(0.9009);-webkit-text-stroke:.3px currentColor;">5</span>
<div style="position:absolute;left:28px;top:328px;width:882px;height:1px;background:#d6d6d6;"></div>
<div style="position:absolute;left:0px;top:328px;width:27px;height:1px;background:#b4b4b4;"></div>
<span class="t" style="left:9.70px;top:330px;font-size:14.2px;color:#262626;transform:scaleX(0.9009);-webkit-text-stroke:.3px currentColor;">6</span>
<div style="position:absolute;left:28px;top:349px;width:882px;height:1px;background:#d6d6d6;"></div>
<div style="position:absolute;left:0px;top:349px;width:27px;height:1px;background:#b4b4b4;"></div>
<span class="t" style="left:9.70px;top:351px;font-size:14.2px;color:#262626;transform:scaleX(0.9009);-webkit-text-stroke:.3px currentColor;">7</span>
<div style="position:absolute;left:28px;top:370px;width:882px;height:1px;background:#d6d6d6;"></div>
<div style="position:absolute;left:0px;top:370px;width:27px;height:1px;background:#b4b4b4;"></div>
<span class="t" style="left:9.70px;top:372px;font-size:14.2px;color:#262626;transform:scaleX(0.9009);-webkit-text-stroke:.3px currentColor;">8</span>
<div style="position:absolute;left:28px;top:391px;width:882px;height:1px;background:#d6d6d6;"></div>
<div style="position:absolute;left:0px;top:391px;width:27px;height:1px;background:#b4b4b4;"></div>
<span class="t" style="left:9.70px;top:393px;font-size:14.2px;color:#262626;transform:scaleX(0.9009);-webkit-text-stroke:.3px currentColor;">9</span>
<div style="position:absolute;left:28px;top:412px;width:882px;height:1px;background:#d6d6d6;"></div>
<div style="position:absolute;left:0px;top:412px;width:27px;height:1px;background:#b4b4b4;"></div>
<span class="t" style="left:5.30px;top:414px;font-size:14.2px;color:#262626;transform:scaleX(0.9875);-webkit-text-stroke:.3px currentColor;">10</span>
<div style="position:absolute;left:28px;top:433px;width:882px;height:1px;background:#d6d6d6;"></div>
<div style="position:absolute;left:0px;top:433px;width:27px;height:1px;background:#b4b4b4;"></div>
<span class="t" style="left:5.30px;top:435px;font-size:14.2px;color:#262626;transform:scaleX(1.0589);-webkit-text-stroke:.3px currentColor;">11</span>
<div style="position:absolute;left:28px;top:454px;width:882px;height:1px;background:#d6d6d6;"></div>
<div style="position:absolute;left:0px;top:454px;width:27px;height:1px;background:#b4b4b4;"></div>
<span class="t" style="left:5.30px;top:456px;font-size:14.2px;color:#262626;transform:scaleX(0.9875);-webkit-text-stroke:.3px currentColor;">12</span>
<div style="position:absolute;left:28px;top:475px;width:882px;height:1px;background:#d6d6d6;"></div>
<div style="position:absolute;left:0px;top:475px;width:27px;height:1px;background:#b4b4b4;"></div>
<span class="t" style="left:5.30px;top:477px;font-size:14.2px;color:#262626;transform:scaleX(0.9875);-webkit-text-stroke:.3px currentColor;">13</span>
<div style="position:absolute;left:28px;top:496px;width:882px;height:1px;background:#d6d6d6;"></div>
<div style="position:absolute;left:0px;top:496px;width:27px;height:1px;background:#b4b4b4;"></div>
<span class="t" style="left:5.30px;top:498px;font-size:14.2px;color:#262626;transform:scaleX(0.9875);-webkit-text-stroke:.3px currentColor;">14</span>
<div style="position:absolute;left:28px;top:517px;width:882px;height:1px;background:#d6d6d6;"></div>
<div style="position:absolute;left:0px;top:517px;width:27px;height:1px;background:#b4b4b4;"></div>
<span class="t" style="left:5.30px;top:519px;font-size:14.2px;color:#262626;transform:scaleX(0.9875);-webkit-text-stroke:.3px currentColor;">15</span>
<div style="position:absolute;left:28px;top:538px;width:882px;height:1px;background:#d6d6d6;"></div>
<div style="position:absolute;left:0px;top:538px;width:27px;height:1px;background:#b4b4b4;"></div>
<span class="t" style="left:5.30px;top:540px;font-size:14.2px;color:#262626;transform:scaleX(0.9875);-webkit-text-stroke:.3px currentColor;">16</span>
<div style="position:absolute;left:28px;top:559px;width:882px;height:1px;background:#d6d6d6;"></div>
<div style="position:absolute;left:0px;top:559px;width:27px;height:1px;background:#b4b4b4;"></div>
<span class="t" style="left:5.30px;top:561px;font-size:14.2px;color:#262626;transform:scaleX(0.9875);-webkit-text-stroke:.3px currentColor;">17</span>
<div style="position:absolute;left:0px;top:224px;width:26px;height:20px;background:#d2d2d2;"></div>
<div style="position:absolute;left:25px;top:224px;width:2px;height:20px;background:#017541;"></div>
<span class="t" style="left:10.00px;top:225px;font-size:14.2px;color:#017541;transform:scaleX(0.6598);-webkit-text-stroke:.3px currentColor;">1</span>
<div style="position:absolute;left:27px;top:223px;width:884px;height:1px;background:#9e9e9e;"></div>
<div style="position:absolute;left:27px;top:223px;width:1px;height:358px;background:#9e9e9e;"></div>
<div style="position:absolute;left:0px;top:580px;width:911px;height:1px;background:#9e9e9e;"></div>
<div style="position:absolute;left:910px;top:223px;width:1px;height:358px;background:#9e9e9e;"></div>
<span class="t" style="left:162.00px;top:225px;font-size:14.2px;color:#111;transform:scaleX(0.8882);-webkit-text-stroke:.3px currentColor;">2</span>
<span class="t" style="left:162.00px;top:246px;font-size:14.2px;color:#111;transform:scaleX(0.8882);-webkit-text-stroke:.3px currentColor;">4</span>
<span class="t" style="left:162.00px;top:267px;font-size:14.2px;color:#111;transform:scaleX(0.8882);-webkit-text-stroke:.3px currentColor;">6</span>
<span class="t" style="left:162.00px;top:288px;font-size:14.2px;color:#111;transform:scaleX(0.8882);-webkit-text-stroke:.3px currentColor;">8</span>
<span class="t" style="left:154.00px;top:309px;font-size:14.2px;color:#111;transform:scaleX(0.9495);-webkit-text-stroke:.3px currentColor;">10</span>
<span class="t" style="left:154.00px;top:330px;font-size:14.2px;color:#111;transform:scaleX(0.9495);-webkit-text-stroke:.3px currentColor;">12</span>
<div style="position:absolute;left:100px;top:224px;width:71px;height:20px;background:#e8f0fa;"></div>
<span class="t" style="left:162.00px;top:225px;font-size:14.2px;color:#111;transform:scaleX(0.8882);-webkit-text-stroke:.3px currentColor;">2</span>
<div style="position:absolute;left:98.5px;top:227px;width:2px;height:15px;background:#1674cc;"></div>
<div style="position:absolute;left:170.5px;top:227px;width:2px;height:15px;background:#1674cc;"></div>
<div style="position:absolute;left:102px;top:244px;width:68px;height:2px;background:#1674cc;"></div>
<div style="position:absolute;left:97px;top:242px;width:5px;height:5px;background:#1674cc;"></div>
<div style="position:absolute;left:169px;top:242px;width:5px;height:5px;background:#1674cc;"></div>
<div style="position:absolute;left:97.5px;top:224px;width:4px;height:2px;background:#1674cc;"></div>
<div style="position:absolute;left:169.5px;top:224px;width:4px;height:2px;background:#1674cc;"></div>
<div style="position:absolute;left:98.5px;top:224px;width:2px;height:3px;background:#1674cc;"></div>
<div style="position:absolute;left:170.5px;top:224px;width:2px;height:3px;background:#1674cc;"></div>
<div style="position:absolute;left:242px;top:221px;width:75.5px;height:25px;border:2px solid #017541;box-sizing:border-box;background:#fff;"></div>
<div style="position:absolute;left:312px;top:241.5px;width:6px;height:5px;background:#fff;"></div>
<div style="position:absolute;left:313.5px;top:243px;width:4.5px;height:3.5px;background:#017541;"></div>
<span class="t" style="left:246.10px;top:225px;font-size:14.2px;color:#111;transform:scaleX(0.8427);-webkit-text-stroke:.3px currentColor;">=</span>
<span class="t" style="left:254.90px;top:225px;font-size:14.2px;color:#1674cc;transform:scaleX(0.9020);-webkit-text-stroke:.3px currentColor;">$B1</span>
<div style="position:absolute;left:279px;top:225px;width:1px;height:19px;background:#333;"></div>
<div style="position:absolute;left:238.4px;top:217px;width:84.4px;height:32.6px;border:3.500px solid #fb0a0a;border-radius:9.500px;box-sizing:border-box;"></div>
<div style="position:absolute;left:914px;top:205px;width:15px;height:15px;background:#fff;border:1px solid #b2b2b2;box-sizing:border-box;"></div>
<svg style="position:absolute;left:918px;top:210px;" width="7" height="4" viewBox="0 0 7 4"><path d="M0 4h7l-3.500-4z" fill="#777"/></svg>
<div style="position:absolute;left:914px;top:220.5px;width:15px;height:293px;background:#fff;border:1px solid #b2b2b2;box-sizing:border-box;"></div>
<div style="position:absolute;left:914px;top:513.5px;width:15px;height:54px;background:repeating-conic-gradient(#cdcdcd 0% 25%,#e6e6e6 0% 50%) 0 0/2px 2px;"></div>
<div style="position:absolute;left:914px;top:567px;width:15px;height:14.5px;background:#fff;border:1px solid #b2b2b2;box-sizing:border-box;"></div>
<svg style="position:absolute;left:918px;top:572.5px;" width="7" height="4" viewBox="0 0 7 4"><path d="M0 0h7l-3.500 4z" fill="#777"/></svg>
</section>
<section aria-label="Sheet tabs and scrollbar">
<svg style="position:absolute;left:26px;top:591px;" width="5" height="7" viewBox="0 0 5 7"><path d="M5 0v7l-5-3.500z" fill="#bebebe"/></svg>
<svg style="position:absolute;left:54.8px;top:591px;" width="5" height="7" viewBox="0 0 5 7"><path d="M0 0v7l5-3.500z" fill="#bebebe"/></svg>
<div style="position:absolute;left:99px;top:581px;width:107px;height:25px;background:#fff;border-bottom:2px solid #017541;border-left:1px solid #b8b8b8;border-right:1px solid #b8b8b8;box-sizing:border-box;"></div>
<span class="t" style="left:111.20px;top:585px;font-size:13.5px;color:#017541;transform:scaleX(0.9421);font-weight:bold;">microexcel.ru</span>
<svg style="position:absolute;left:238.3px;top:586.5px;" width="17" height="17" viewBox="0 0 17 17"><circle cx="8.500" cy="8.500" r="7.500" fill="none" stroke="#6a6a6a" stroke-width="1.200"/><path d="M8.500 4.500v8M4.500 8.500h8" stroke="#6a6a6a" stroke-width="1.400"/></svg>
<div style="position:absolute;left:558.5px;top:590px;width:2px;height:2px;background:#b4b4b4;"></div>
<div style="position:absolute;left:558.5px;top:594px;width:2px;height:2px;background:#b4b4b4;"></div>
<div style="position:absolute;left:558.5px;top:598px;width:2px;height:2px;background:#b4b4b4;"></div>
<div style="position:absolute;left:576px;top:588px;width:15px;height:14.5px;background:#fff;border:1px solid #b2b2b2;box-sizing:border-box;"></div>
<svg style="position:absolute;left:581px;top:592px;" width="4" height="7" viewBox="0 0 4 7"><path d="M4 0v7l-4-3.500z" fill="#666"/></svg>
<div style="position:absolute;left:591px;top:588px;width:279px;height:14.5px;background:#fff;border:1px solid #b2b2b2;box-sizing:border-box;"></div>
<div style="position:absolute;left:870px;top:588px;width:26px;height:14.5px;background:repeating-conic-gradient(#cdcdcd 0% 25%,#e6e6e6 0% 50%) 0 0/2px 2px;"></div>
<div style="position:absolute;left:898px;top:588px;width:15px;height:14.5px;background:#fff;border:1px solid #b2b2b2;box-sizing:border-box;"></div>
<svg style="position:absolute;left:904px;top:592px;" width="4" height="7" viewBox="0 0 4 7"><path d="M0 0v7l4-3.500z" fill="#666"/></svg>
</section>
<section aria-label="Status bar">
<div style="position:absolute;left:0px;top:609px;width:932px;height:23px;background:#f3f3f3;border-top:1px solid #c8c8c8;box-sizing:border-box;"></div>
<span class="t" style="left:7.50px;top:609px;font-size:10.8px;color:#3c3c3c;transform:scaleX(1.0123);">Ввод</span>
<svg style="position:absolute;left:71px;top:613px;" width="13" height="13" viewBox="0 0 13 13"><circle cx="3" cy="3" r="2.700" fill="#555"/><path d="M7 1.500h5.500v2h-5.500z" fill="#555"/><path d="M1.500 6.500v6h11v-9" fill="none" stroke="#555"/><path d="M3.500 8h2M6.500 8h2M9.500 8h2M3.500 10.500h2M6.500 10.500h2M9.500 10.500h2" stroke="#555" stroke-width="1.300"/></svg>
<svg style="position:absolute;left:644px;top:613px;" width="13" height="13" viewBox="0 0 13 13"><path d="M.7 .7h11.600v11.600h-11.600zM.7 4.500h11.600M.7 8.500h11.600M4.500 .7v11.600M8.500 .7v11.600" fill="none" stroke="#6a6a6a" stroke-width="1.400"/></svg>
<svg style="position:absolute;left:682px;top:613px;" width="14" height="13" viewBox="0 0 14 13"><rect x=".7" y=".7" width="12.600" height="11.600" fill="none" stroke="#6a6a6a" stroke-width="1.400"/><rect x="3.500" y="3.300" width="7" height="6.400" fill="none" stroke="#6a6a6a" stroke-width="1.100"/><path d="M5 5.500h4M5 7.500h4" stroke="#6a6a6a" stroke-width=".9"/></svg>
<svg style="position:absolute;left:720px;top:613px;" width="14" height="13" viewBox="0 0 14 13"><rect x=".7" y=".7" width="12.600" height="11.300" fill="none" stroke="#6a6a6a" stroke-width="1.300"/><path d="M.7 6.500h8.300v-5.800M4.600 .7v5.800" fill="none" stroke="#6a6a6a" stroke-width="1.100"/></svg>
<div style="position:absolute;left:751px;top:618.5px;width:6px;height:2px;background:#333;"></div>
<div style="position:absolute;left:761px;top:619px;width:99px;height:1px;background:#b0b0b0;"></div>
<div style="position:absolute;left:811px;top:616.5px;width:1px;height:6.5px;background:#b0b0b0;"></div>
<div style="position:absolute;left:864.5px;top:618.5px;width:7px;height:2px;background:#333;"></div>
<div style="position:absolute;left:867px;top:616px;width:2px;height:7.5px;background:#333;"></div>
<span class="t" style="left:884.20px;top:609px;font-size:10.8px;color:#a2a2a2;transform:scaleX(0.9341);will-change:transform;">100 %</span>
<div style="position:absolute;left:0px;top:0px;width:932px;height:1px;background:#d6ced1;"></div>
<div style="position:absolute;left:0px;top:0px;width:1px;height:632px;background:#d2cccf;"></div>
<div style="position:absolute;left:931px;top:0px;width:1px;height:632px;background:#c8c8c8;"></div>
<div style="position:absolute;left:0px;top:630.5px;width:932px;height:1.5px;background:#c4c4c4;"></div>
</section>
</body></html>
